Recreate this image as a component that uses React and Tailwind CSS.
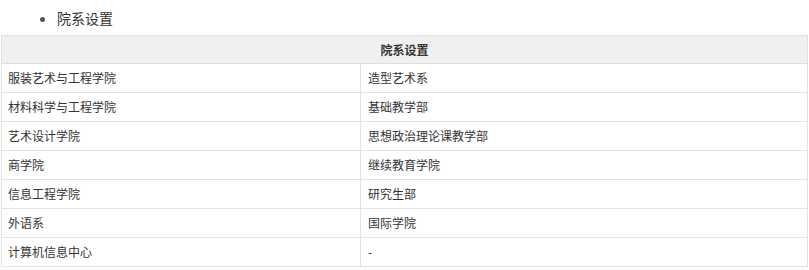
const ROWS = [
  ["服装艺术与工程学院", "造型艺术系"],
  ["材料科学与工程学院", "基础教学部"],
  ["艺术设计学院", "思想政治理论课教学部"],
  ["商学院", "继续教育学院"],
  ["信息工程学院", "研究生部"],
  ["外语系", "国际学院"],
  ["计算机信息中心", "-"],
];

export default function App() {
  return (
    <div
      className="bg-white text-[#333] pt-[7px]"
      style={{ fontFamily: '"Noto Sans CJK SC", "Noto Sans", sans-serif' }}
    >
      <ul className="list-disc pl-[57px] text-[14px] leading-[22px] h-[28px] marker:text-[#555]">
        <li>院系设置</li>
      </ul>

      <table className="ml-px w-[807px] border-collapse text-[12px] table-fixed">
        <colgroup>
          <col className="w-[359px]" />
          <col />
        </colgroup>
        <thead>
          <tr className="h-[28px] bg-[#f0f0f0]">
            <th
              colSpan={2}
              className="border border-[#dedede] text-center font-bold"
            >
              院系设置
            </th>
          </tr>
        </thead>
        <tbody>
          {ROWS.map(([left, right]) => (
            <tr key={left} className="h-[29px]">
              <td className="border border-[#e3e3e3] px-[6px] align-middle">
                {left}
              </td>
              <td className="border border-[#e3e3e3] px-[7px] align-middle">
                {right}
              </td>
            </tr>
          ))}
        </tbody>
      </table>
    </div>
  );
}
